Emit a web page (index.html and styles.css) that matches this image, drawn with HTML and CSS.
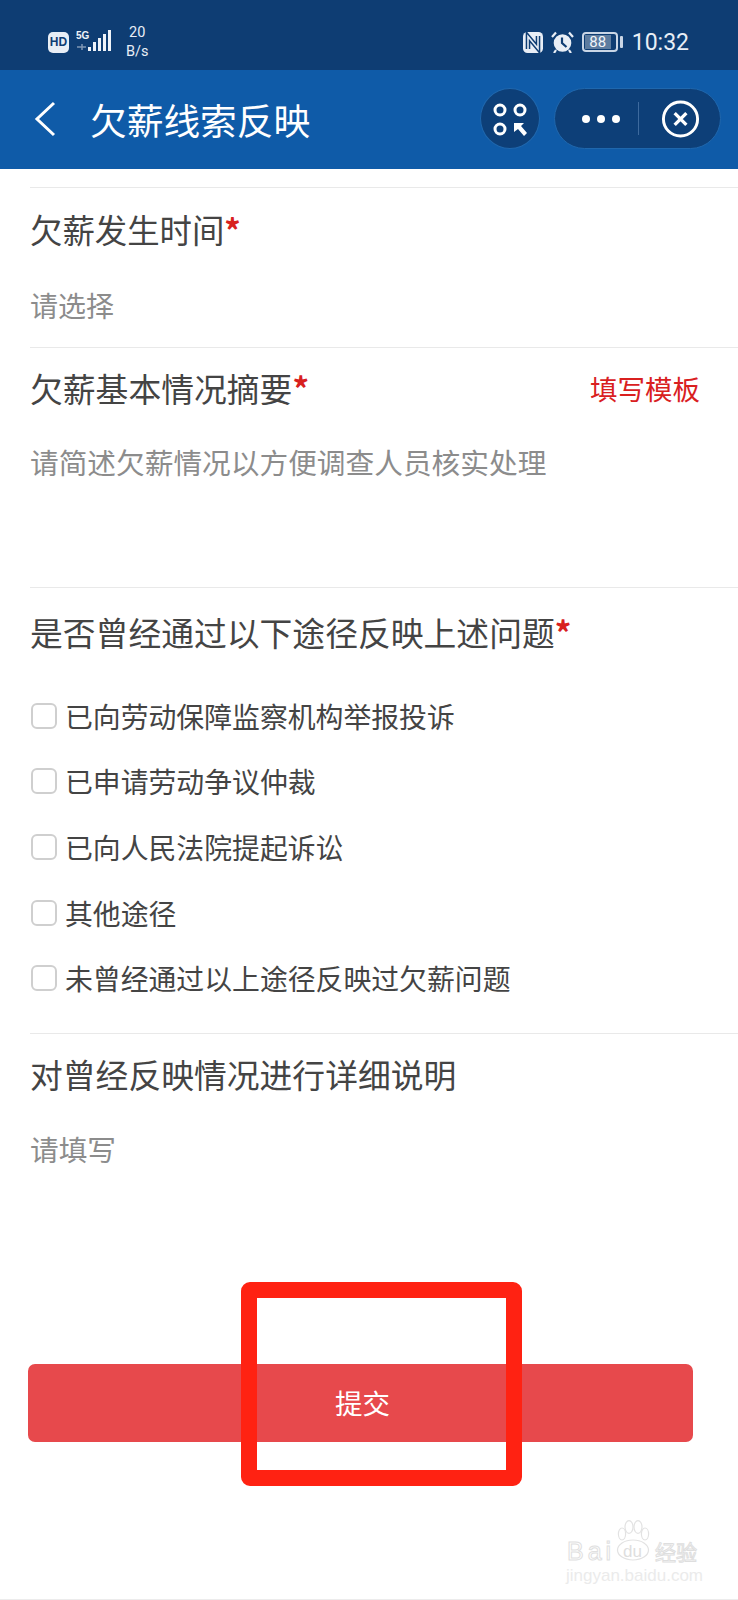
FILE: index.html
```html
<!DOCTYPE html>
<html lang="zh">
  <head>
    <meta charset="UTF-8" />
    <title>欠薪线索反映</title>
    <link rel="stylesheet" href="styles.css">
  </head>
  <body>
    <div class="statusbar">
      <div class="status-left">
        <span class="hd">HD</span>
        <svg class="signal" width="36" height="24" viewBox="0 0 36 24">
          <text x="0" y="9" class="five-g">5G</text>
          <path d="M1 17h9M6 14v6" stroke="#7f97b5" stroke-width="1.5" fill="none"/>
          <rect x="12" y="17" width="3" height="4" fill="#eef3f9"/>
          <rect x="17" y="12" width="3" height="9" fill="#eef3f9"/>
          <rect x="22" y="8" width="3" height="13" fill="#eef3f9"/>
          <rect x="27" y="4" width="3" height="17" fill="#eef3f9"/>
          <rect x="32" y="0" width="3" height="21" fill="#eef3f9"/>
        </svg>
        <span class="speed">20<br>B/s</span>
      </div>
      <div class="status-right">
        <svg class="nfc" width="20" height="21" viewBox="0 0 20 21">
          <rect x="0" y="0" width="20" height="21" rx="4.5" fill="#e8eef6"/>
          <path d="M5 17V4.5L15 16.5V4" stroke="#0e3d73" stroke-width="4.6" fill="none"/>
          <path d="M5 17V4.5L15 16.5V4" stroke="#e8eef6" stroke-width="1.6" fill="none"/>
        </svg>
        <svg class="alarm" width="23" height="22" viewBox="0 0 23 22">
          <circle cx="11.5" cy="12" r="8.8" fill="#e8eef6"/>
          <path d="M11 6.5V12l4.5 4" stroke="#0e3d73" stroke-width="2.2" fill="none"/>
          <path d="M1 6l4-4.5M22 6l-4-4.5M5 19l-2 3M18 19l2 3" stroke="#e8eef6" stroke-width="2.2" fill="none"/>
        </svg>
        <span class="battery"><span class="battery-level">88</span></span>
        <span class="battery-tip"></span>
        <span class="clock">10:32</span>
      </div>
    </div>

    <div class="navbar">
      <svg class="back" width="24" height="36" viewBox="0 0 24 36">
        <path d="M21 2L4 18l17 16" stroke="#fff" stroke-width="3" fill="none"/>
      </svg>
      <h1 class="nav-title">欠薪线索反映</h1>
      <div class="nav-round">
        <svg width="36" height="36" viewBox="0 0 36 36">
          <g fill="none" stroke="#fff" stroke-width="3">
            <circle cx="8" cy="9" r="5"/>
            <circle cx="28" cy="9" r="5"/>
            <circle cx="8" cy="28" r="5"/>
          </g>
          <path d="M22 22h10l-3 3 6 7-3 3-6-7-4 3z" fill="#fff"/>
        </svg>
      </div>
      <div class="capsule">
        <div class="dots"><i></i><i></i><i></i></div>
        <div class="capsule-sep"></div>
        <svg class="close" width="40" height="40" viewBox="0 0 40 40">
          <circle cx="20" cy="20" r="17.5" fill="none" stroke="#fff" stroke-width="3"/>
          <path d="M14 14l12 12M26 14L14 26" stroke="#fff" stroke-width="3.4" fill="none"/>
        </svg>
      </div>
    </div>

    <form class="form">
      <div class="field field-time">
        <div class="label">欠薪发生时间<span class="req">*</span></div>
        <div class="placeholder">请选择</div>
      </div>
      <div class="field field-summary">
        <div class="label-row">
          <div class="label">欠薪基本情况摘要<span class="req">*</span></div>
          <a class="template">填写模板</a>
        </div>
        <div class="placeholder">请简述欠薪情况以方便调查人员核实处理</div>
      </div>
      <div class="field field-channels">
        <div class="label">是否曾经通过以下途径反映上述问题<span class="req">*</span></div>
        <ul class="checks">
          <li><span class="box"></span>已向劳动保障监察机构举报投诉</li>
          <li><span class="box"></span>已申请劳动争议仲裁</li>
          <li><span class="box"></span>已向人民法院提起诉讼</li>
          <li><span class="box"></span>其他途径</li>
          <li><span class="box"></span>未曾经通过以上途径反映过欠薪问题</li>
        </ul>
      </div>
      <div class="field field-detail">
        <div class="label">对曾经反映情况进行详细说明</div>
        <div class="placeholder">请填写</div>
      </div>
      <div class="submit-wrap">
        <div class="submit">提交</div>
      </div>
    </form>

    <div class="red-box"></div>

    <div class="watermark">
      <svg class="paw" width="34" height="42" viewBox="0 0 34 42">
        <g fill="#fff" stroke="#e2e2e2" stroke-width="1.2">
          <ellipse cx="6" cy="14" rx="3.6" ry="6"/>
          <ellipse cx="13" cy="7" rx="4" ry="6.4"/>
          <ellipse cx="22" cy="7" rx="4" ry="6.4"/>
          <ellipse cx="29" cy="14" rx="3.6" ry="6"/>
          <ellipse cx="17" cy="30" rx="15.5" ry="10"/>
        </g>
      </svg>
      <span class="wm-bai">Bai</span>
      <span class="wm-du">du</span>
      <span class="wm-cn">经验</span>
      <span class="wm-url">jingyan.baidu.com</span>
    </div>
  </body>
</html>
```

FILE: styles.css
```css
html, body {
   margin: 0;
   padding: 0;
}
body {
   position: relative;
   width: 738px;
   height: 1600px;
   overflow: hidden;
   background-color: #fff;
   font-family: "Noto Sans CJK SC", "Liberation Sans", sans-serif;
   color: #444;
}

/* status bar */
.statusbar {
   height: 70px;
   background-color: #0e3d73;
   display: flex;
   justify-content: space-between;
   align-items: center;
   padding: 14px 49px 0 48px;
   box-sizing: border-box;
   color: #e8eef6;
}
.status-left, .status-right {
   display: flex;
   align-items: center;
}
.hd {
   width: 21px;
   height: 21px;
   line-height: 21px;
   border-radius: 5px;
   background-color: #e8eef6;
   color: #0e3d73;
   font-family: "Liberation Sans", sans-serif;
   font-size: 12px;
   font-weight: bold;
   text-align: center;
}
.signal {
   margin-left: 7px;
}
.five-g {
   font-family: "Liberation Sans", sans-serif;
   font-size: 10px;
   font-weight: bold;
   fill: #eef3f9;
}
.speed {
   margin-left: 14px;
   font-family: Roboto, sans-serif;
   font-size: 14.5px;
   line-height: 19px;
   text-align: center;
}
.nfc, .alarm {
   margin-right: 8px;
}
.battery {
   width: 36px;
   height: 20px;
   box-sizing: border-box;
   border: 2px solid #c9d6e6;
   border-radius: 4px;
   padding: 1px 5px 1px 1px;
   display: flex;
}
.battery-level {
   flex: 1;
   background-color: #5d7c9f;
   color: #f2f5f9;
   font-family: Roboto, sans-serif;
   font-size: 15px;
   line-height: 14px;
   text-align: center;
}
.battery-tip {
   width: 3px;
   height: 12px;
   margin-left: 2px;
   border-radius: 1px;
   background-color: #c9d6e6;
}
.clock {
   margin-left: 9px;
   font-family: Roboto, sans-serif;
   font-size: 23px;
}

/* nav bar */
.navbar {
   height: 99px;
   background-color: #0f5ba8;
   display: flex;
   align-items: center;
   box-sizing: border-box;
   padding: 0 17px 2px 33px;
}
.back {
   flex: none;
}
.nav-title {
   flex: 1;
   margin: 0 0 0 33px;
   font-size: 36.7px;
   font-weight: 400;
   color: #fff;
   line-height: 48px;
}
.nav-round {
   width: 60px;
   height: 61px;
   box-sizing: border-box;
   margin-left: 1px;
   border: 1px solid #1f67ad;
   border-radius: 50%;
   background-color: #0d3f78;
   display: flex;
   align-items: center;
   justify-content: center;
}
.capsule {
   width: 167px;
   height: 61px;
   box-sizing: border-box;
   margin-left: 14px;
   border: 1px solid #1f67ad;
   border-radius: 31px;
   background-color: #0d3f78;
   display: flex;
   align-items: center;
   padding: 0 20px 0 27px;
}
.dots {
   display: flex;
   gap: 7px;
}
.dots i {
   width: 8px;
   height: 8px;
   border-radius: 50%;
   background-color: #fff;
}
.capsule-sep {
   width: 1px;
   height: 33px;
   margin: 0 22px 0 18px;
   background-color: #3d6a9e;
}

/* form */
.form {
   padding-top: 18px;
}
.field {
   margin-left: 30px;
   border-top: 1px solid #e9e9e9;
   box-sizing: border-box;
}
.field-time {
   height: 160px;
   padding-top: 19px;
}
.field-summary {
   height: 240px;
   padding-top: 18px;
}
.field-channels {
   height: 446px;
   padding-top: 22px;
}
.field-detail {
   height: 241px;
   padding-top: 18px;
}
.label {
   font-size: 32.8px;
   line-height: 44px;
}
.field-time .label {
   font-size: 32.4px;
}
.req {
   color: #d8201e;
   font-weight: 700;
}
.label-row {
   display: flex;
   justify-content: space-between;
   padding-right: 38px;
}
.template {
   font-size: 27.5px;
   line-height: 44px;
   color: #d9201f;
}
.placeholder {
   margin-top: 32px;
   font-size: 28.7px;
   line-height: 40px;
   color: #8c8c8c;
}
.field-time .placeholder {
   margin-top: 34px;
   font-size: 28px;
}
.field-detail .placeholder {
   margin-top: 33px;
}
.checks {
   list-style: none;
   margin: 29px 0 0;
   padding: 0;
}
.checks li {
   display: flex;
   align-items: center;
   height: 65.6px;
   font-size: 27.85px;
}
.box {
   width: 26px;
   height: 26px;
   box-sizing: border-box;
   margin: 0 8px 0 1px;
   border: 2px solid #cfcfcf;
   border-radius: 6px;
   background-color: #fff;
}
.submit-wrap {
   padding: 90px 45px 0 28px;
}
.submit {
   height: 78px;
   box-sizing: border-box;
   padding-left: 4px;
   border-radius: 7px;
   background-color: #e7494c;
   color: #fff;
   font-size: 27.5px;
   line-height: 76px;
   text-align: center;
}

/* screenshot annotation, sits over the button */
.red-box {
   position: absolute;
   left: 241px;
   top: 1282px;
   width: 281px;
   height: 204px;
   box-sizing: border-box;
   border: 16px solid #ff2212;
   border-radius: 9px;
}

/* watermark in the corner */
.watermark {
   position: absolute;
   left: 566px;
   top: 1520px;
   width: 132px;
   height: 66px;
}
.watermark span {
   position: absolute;
   white-space: nowrap;
}
.paw {
   position: absolute;
   left: 50px;
   top: 0;
}
.wm-bai {
   left: 1px;
   top: 16px;
   font-family: "Liberation Sans", sans-serif;
   font-size: 25px;
   line-height: 30px;
   letter-spacing: 4px;
   color: #fff;
   -webkit-text-stroke: 1px #e0e0e0;
}
.wm-du {
   left: 57px;
   top: 22px;
   font-family: "Liberation Sans", sans-serif;
   font-size: 17px;
   line-height: 20px;
   color: #dedede;
}
.wm-cn {
   left: 89px;
   top: 18px;
   font-size: 21px;
   line-height: 26px;
   color: #fff;
   -webkit-text-stroke: 1px #dedede;
}
.wm-url {
   left: 0;
   top: 47px;
   font-family: "Liberation Sans", sans-serif;
   font-size: 17px;
   line-height: 18px;
   color: #ebebeb;
}
body::after {
   content: "";
   position: absolute;
   left: 0;
   right: 0;
   top: 1599px;
   height: 1px;
   background-color: #ececec;
}
```
